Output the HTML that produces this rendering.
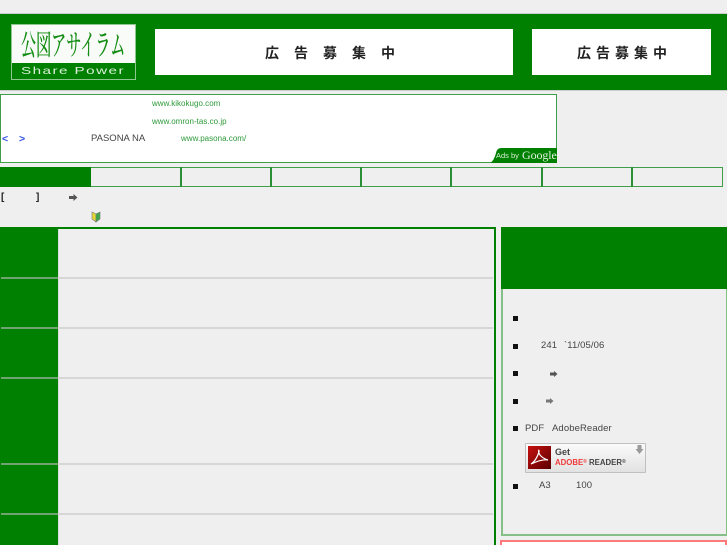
<!DOCTYPE html>
<html lang="ja"><head><meta charset="utf-8"><title>公図アサイラム</title>
<style>
html,body{margin:0;padding:0;width:727px;height:545px;overflow:hidden}
body{background:#efefef;font-family:"Liberation Sans","Noto Sans CJK JP",sans-serif;color:#333}
#w{position:absolute;left:0;top:0;width:727px;height:545px;overflow:hidden;background:#efefef}
.a{position:absolute;box-sizing:border-box;white-space:nowrap}
.lnk{font-size:8px;color:#2e9a3a;line-height:10px;letter-spacing:.02px}
.hr{left:2px;width:491px;height:2px;background:#d6d6d6}
.hrg{left:1px;width:57px;height:2px;background:#6fa36f}
.sep{top:167px;width:2px;height:20px;background:#2a8f35}
.li{left:513px;width:5px;height:5px;background:#111}
.t{font-size:9.5px;line-height:12px;color:#444;letter-spacing:.1px}
</style></head><body><div id="w">
<div class="a" style="left:0;top:13px;width:727px;height:1px;background:#ccc"></div>
<div class="a" style="left:0;top:14px;width:727px;height:76px;background:#008000"></div>
<div class="a" style="left:0;top:90px;width:727px;height:1px;background:#ccc"></div>

<div class="a" style="left:11px;top:24px;width:125px;height:56px;border:1px solid #8fc78f;background:#008000"></div>
<div class="a" style="left:12px;top:25px;width:123px;height:38px;background:#f8fbf8"></div>
<div class="a" style="left:21px;top:26px;font:500 29px/36px 'Noto Serif CJK SC','Noto Sans CJK JP',sans-serif;color:#128c12;transform:scaleX(.52);transform-origin:0 0;letter-spacing:0">公図アサイラム</div>
<div class="a" style="left:21px;top:64px;font-size:10.5px;line-height:14px;color:#dcefdc;letter-spacing:1px;transform:scaleX(1.45);transform-origin:0 0">Share Power</div>

<div class="a" style="left:155px;top:29px;width:358px;height:46px;background:#fff"></div>
<div class="a" style="left:265px;top:44px;font:bold 14px/18px 'Noto Sans CJK JP',sans-serif;color:#222;letter-spacing:15px">広告募集中</div>
<div class="a" style="left:532px;top:29px;width:179px;height:46px;background:#fff"></div>
<div class="a" style="left:577px;top:44px;font:bold 14px/18px 'Noto Sans CJK JP',sans-serif;color:#222;letter-spacing:5px">広告募集中</div>

<div class="a" style="left:0;top:94px;width:557px;height:69px;border:1px solid #3f9f48;background:#fff"></div>
<div class="a lnk" style="left:152px;top:99px">www.kikokugo.com</div>
<div class="a lnk" style="left:152px;top:117px">www.omron-tas.co.jp</div>
<div class="a lnk" style="left:181px;top:134px">www.pasona.com/</div>
<div class="a" style="left:91px;top:133px;font-size:9.5px;line-height:12px;color:#444">PASONA NA</div>
<div class="a" style="left:2px;top:133px;font:bold 10.500px/12px 'Liberation Sans',sans-serif;color:#2f4fe0;word-spacing:8px">&lt; &gt;</div>
<svg class="a" style="left:490px;top:148px" width="67" height="15"><path d="M0 15Q4 13 6 5Q7 0 11 0H67V15Z" fill="#008000"/></svg>
<div class="a" style="left:496px;top:151px;font-size:7.500px;line-height:10px;color:#d8ecd8">Ads by</div>
<div class="a" style="left:522px;top:147px;font:12px/16px 'Liberation Serif',serif;color:#e4f2e4;letter-spacing:-.1px">Google</div>

<div class="a" style="left:0;top:167px;width:723px;height:20px;border:1px solid #3f9f48"></div>
<div class="a" style="left:0;top:167px;width:91px;height:20px;background:#008000"></div>
<div class="a sep" style="left:180px"></div>
<div class="a sep" style="left:270px"></div>
<div class="a sep" style="left:360px"></div>
<div class="a sep" style="left:450px"></div>
<div class="a sep" style="left:541px"></div>
<div class="a sep" style="left:631px"></div>

<div class="a" style="left:1px;top:191px;font:bold 10px/13px 'Liberation Sans',sans-serif;color:#222">[</div>
<div class="a" style="left:36px;top:191px;font:bold 10px/13px 'Liberation Sans',sans-serif;color:#222">]</div>
<svg class="a" style="left:69px;top:194px" width="9" height="7"><path d="M0 2H4.500V0L8.500 3.500L4.500 7V5H0Z" fill="#555"/></svg>
<svg class="a" style="left:91px;top:211px" width="10" height="12"><path d="M5 3L1 1V8L5 11Z" fill="#e6d83a" stroke="#777" stroke-width=".6"/><path d="M5 3L9 1V8L5 11Z" fill="#3aa84a" stroke="#777" stroke-width=".6"/></svg>

<div class="a" style="left:0;top:227px;width:496px;height:330px;border:2px solid #008000;border-left:0"></div>
<div class="a" style="left:0;top:227px;width:58px;height:318px;background:#008000"></div>
<div class="a" style="left:58px;top:229px;width:1px;height:316px;background:#ddd"></div>
<div class="a hr" style="top:277px"></div><div class="a hrg" style="top:277px"></div>
<div class="a hr" style="top:327px"></div><div class="a hrg" style="top:327px"></div>
<div class="a hr" style="top:377px"></div><div class="a hrg" style="top:377px"></div>
<div class="a hr" style="top:463px"></div><div class="a hrg" style="top:463px"></div>
<div class="a hr" style="top:513px"></div><div class="a hrg" style="top:513px"></div>

<div class="a" style="left:501px;top:227px;width:226px;height:62px;background:#008000"></div>
<div class="a" style="left:501px;top:289px;width:226px;height:247px;border:2px solid #86bf88;border-top:0;border-right:1px solid #86bf88"></div>
<div class="a" style="left:500px;top:540px;width:227px;height:10px;border:2px solid #ff7a7a;background:#fff"></div>

<div class="a li" style="top:316px"></div>
<div class="a li" style="top:344px"></div>
<div class="a li" style="top:371px"></div>
<div class="a li" style="top:399px"></div>
<div class="a li" style="top:426px"></div>
<div class="a li" style="top:484px"></div>
<div class="a t" style="left:541px;top:340px">241</div>
<div class="a t" style="left:564px;top:340px">`11/05/06</div>
<svg class="a" style="left:550px;top:371px" width="8" height="6"><path d="M0 1.500H4V0L7.500 3L4 6V4.500H0Z" fill="#555"/></svg>
<svg class="a" style="left:546px;top:398px" width="8" height="6"><path d="M0 1.500H4V0L7.500 3L4 6V4.500H0Z" fill="#777"/></svg>
<div class="a t" style="left:525px;top:423px">PDF</div>
<div class="a t" style="left:552px;top:423px">AdobeReader</div>

<div class="a" style="left:525px;top:443px;width:121px;height:30px;border:1px solid #c0c0c0;border-radius:1px;background:linear-gradient(#fafafa,#e2e2e2)"></div>
<div class="a" style="left:528px;top:446px;width:23px;height:23px;background:linear-gradient(135deg,#c81010,#5a0000)"></div>
<svg class="a" style="left:528px;top:446px" width="23" height="23"><path d="M3 18Q8 15 11 6Q11 3 10.500 5Q11 11 20 14Q14 13 3 18Z" fill="none" stroke="#fff" stroke-width="1.200"/></svg>
<div class="a" style="left:555px;top:447px;font:9px/11px 'Liberation Sans',sans-serif;color:#444;font-weight:bold">Get</div>
<div class="a" style="left:555px;top:457px;font:bold 7.800px/11px 'Liberation Sans',sans-serif;color:#ef3a3a">ADOBE<span style="font-size:5px;vertical-align:2px">®</span> <span style="color:#444">READER<span style="font-size:5px;vertical-align:2px">®</span></span></div>
<svg class="a" style="left:635px;top:445px" width="9" height="10"><path d="M2.500 0H6.500V4H8.500L4.500 9L.5 4H2.500Z" fill="#9a9a9a"/></svg>

<div class="a t" style="left:539px;top:480px">A3</div>
<div class="a t" style="left:576px;top:480px">100</div>
</div></body></html>
